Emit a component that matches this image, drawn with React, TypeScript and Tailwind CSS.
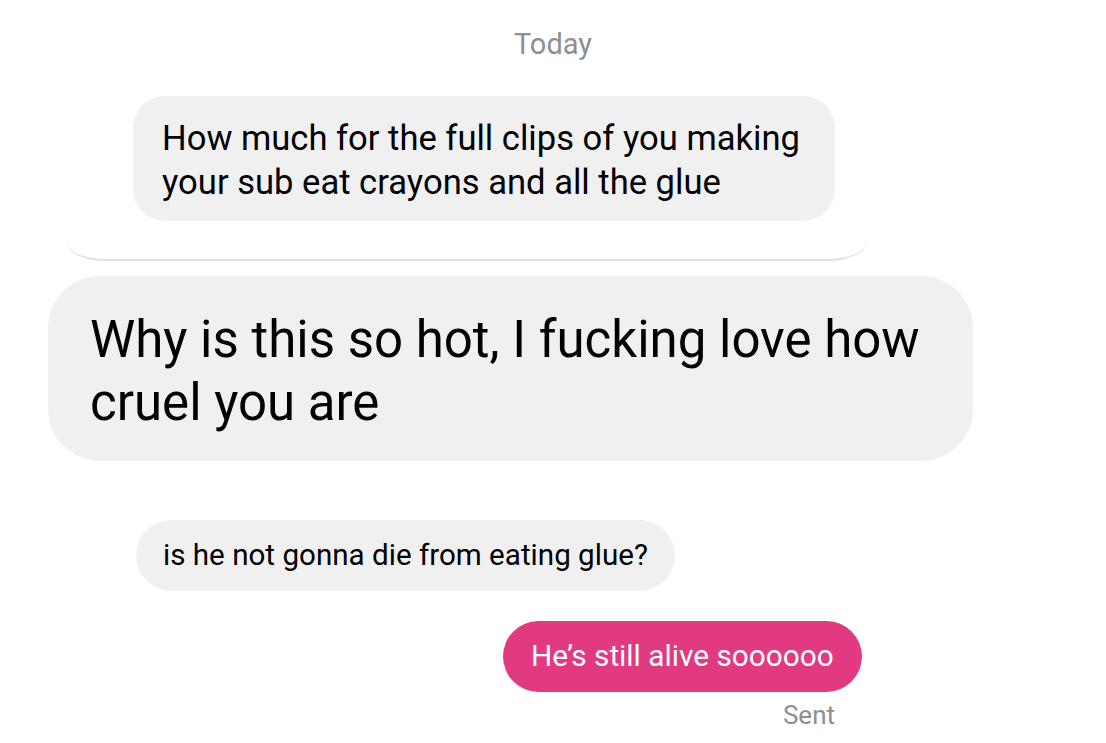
export default function App() {
  return (
    <div className="w-[1106px] h-[743px] bg-white overflow-hidden font-['Roboto',sans-serif] text-black">
      <div className="pt-[26px] text-center text-[29px] leading-[36px] text-[#8e8e93]">Today</div>

      <div className="mt-[34px] ml-[133px] w-[702px] h-[125px] rounded-[32px] bg-[#f0f0f0] pl-[29px] pr-[30px] pt-[20px] text-[34.6px] leading-[44px]">
        How much for the full clips of you making your sub eat crayons and all the glue
      </div>

      <div className="mt-[19px] ml-[65px] w-[803px] h-[21px] rounded-bl-[40px_21px] rounded-br-[40px_21px] border-b-2 border-[#e2e2e2]"></div>

      <div className="mt-[15px] ml-[48px] w-[925px] h-[185px] rounded-[52px] bg-[#f0f0f0] pl-[42px] pt-[32px] text-[51px] leading-[63px]">
        Why is this so hot, I fucking love how cruel you are
      </div>

      <div className="mt-[59px] ml-[136px] w-fit h-[71px] rounded-[36px] bg-[#f0f0f0] px-[27px] flex items-center text-[29.6px]">
        is he not gonna die from eating glue?
      </div>

      <div className="mt-[30px] ml-[503px] w-fit h-[71px] rounded-[36px] bg-[#e23a80] px-[28px] flex items-center text-[29.8px] text-white">
        He’s still alive soooooo
      </div>

      <div className="w-[835px] text-right text-[26px] leading-[30px] mt-[8px] text-[#8e8e93]">Sent</div>
    </div>
  );
}
